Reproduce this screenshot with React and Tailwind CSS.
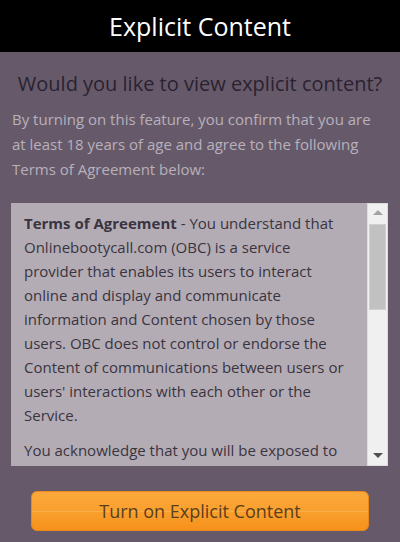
const TERMS_LINES = [
  'Onlinebootycall.com (OBC) is a service',
  'provider that enables its users to interact',
  'online and display and communicate',
  'information and Content chosen by those',
  'users. OBC does not control or endorse the',
  'Content of communications between users or',
  "users' interactions with each other or the",
  'Service.',
];

export default function App() {
  return (
    <div className="flex h-[542px] w-[400px] flex-col overflow-hidden bg-[#665a6a] font-['Open_Sans',sans-serif]">
      <div className="flex h-[52px] shrink-0 items-center justify-center bg-black">
        <h1 className="text-[25px] leading-none text-white">Explicit Content</h1>
      </div>

      <p className="mt-[19px] text-center text-[20px] leading-[26px] text-[#2a2230]">
        Would you like to view explicit content?
      </p>

      <p className="mt-[10px] px-3 text-[15px] leading-[25px] text-[#b8b0bb]">
        By turning on this feature, you confirm that you are at least 18 years of age and agree to the following Terms of Agreement below:
      </p>

      <div className="mx-[11px] mt-[21px] flex h-[263px] w-[377px] overflow-hidden bg-[#b4acb5]">
        <div className="flex-1 whitespace-nowrap px-[13px] pt-[8px] text-[15px] leading-[24px] text-[#3a3440]">
          <p>
            <span className="font-bold">Terms of Agreement</span> - You understand that
            {TERMS_LINES.map((line) => (
              <span key={line} className="block">{line}</span>
            ))}
          </p>
          <p className="mt-[11px]">You acknowledge that you will be exposed to</p>
        </div>
        <div className="flex w-[21px] shrink-0 flex-col items-center border border-[#dcdcdc] bg-[#f0f0f0]">
          <div className="mt-[6px] h-0 w-0 border-x-[5px] border-b-[5px] border-x-transparent border-b-[#a3a3a3]" />
          <div className="mt-[9px] h-[86px] w-[17px] border border-[#d0d0d0] bg-[#c1c1c1]" />
          <div className="flex-1" />
          <div className="mb-[7px] h-0 w-0 border-x-[5px] border-t-[5px] border-x-transparent border-t-[#505050]" />
        </div>
      </div>

      <div className="flex justify-center">
        <button className="relative mt-[25px] h-[40px] w-[338px] overflow-hidden rounded-[6px] border border-[#e8891a] bg-gradient-to-b from-[#fba83c] via-[#f9a02e] to-[#f7911a] text-[18px] text-[#5b3f1c]">
          <span className="absolute inset-x-0 top-[19px] h-px bg-[#ffb552] opacity-70" />
          <span className="relative">Turn on Explicit Content</span>
        </button>
      </div>
    </div>
  );
}
